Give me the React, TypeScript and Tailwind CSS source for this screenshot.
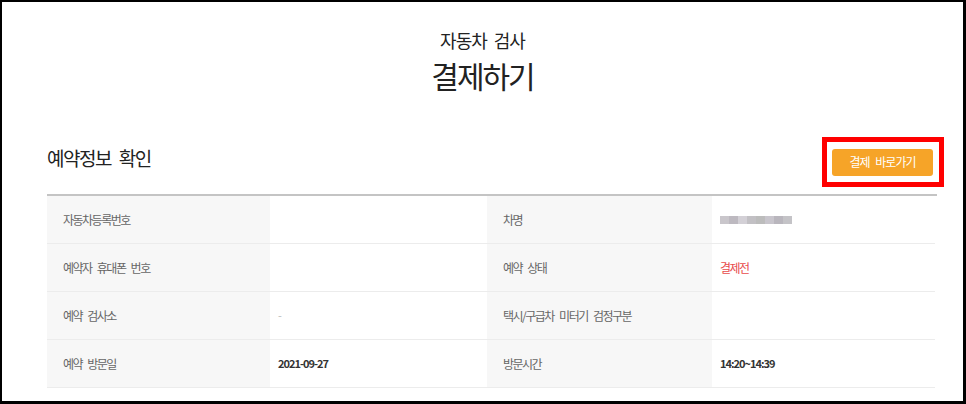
import React from "react";

interface Cell {
  label: string;
  value?: React.ReactNode;
}

const rows: [Cell, Cell][] = [
  [{ label: "자동차등록번호" }, { label: "차명", value: "blur" }],
  [{ label: "예약자 휴대폰 번호" }, { label: "예약 상태", value: "결제전" }],
  [{ label: "예약 검사소", value: "-" }, { label: "택시/구급차 미터기 검정구분" }],
  [
    { label: "예약 방문일", value: "2021-09-27" },
    { label: "방문시간", value: "14:20~14:39" },
  ],
];

function BlurredName() {
  // 모자이크 처리된 차명
  const tones = ["#c9c6cb", "#bdb9c0", "#d3d0d6", "#c2c0c4", "#bcbcbc", "#c8c5cc", "#b9b6bd", "#c4c3c7"];
  return (
    <div className="flex h-[8px] w-[72px] blur-[0.6px]">
      {tones.map((c, i) => (
        <span key={i} className="h-full flex-1" style={{ backgroundColor: c }} />
      ))}
    </div>
  );
}

function Value({ label, value }: Cell) {
  if (value === "blur") return <BlurredName />;
  if (label === "예약 상태")
    return <span className="text-[12px] tracking-[-1.5px] text-[#e84c4c]">{value}</span>;
  if (value === "-") return <span className="text-[11px] text-[#bbb]">-</span>;
  return <span className="text-[11px] font-semibold tracking-[-1px] text-[#333]">{value}</span>;
}

export default function App() {
  return (
    <div
      className="w-[966px] h-[404px] overflow-hidden bg-white border-t-2 border-l-2 border-r-[3px] border-b-[3px] border-black"
      style={{ fontFamily: '"Noto Sans CJK KR", "Noto Sans", sans-serif' }}
    >
      <div className="pt-[26px] text-center text-[#222]">
        <p className="text-[18px] leading-[24px] tracking-[-1px] [word-spacing:4px]">자동차 검사</p>
        <h1 className="mt-[3px] text-[30px] leading-[40px] tracking-[-2px]">결제하기</h1>
      </div>

      <div className="mt-[42px] flex items-start justify-between pl-[45px] pr-[19px]">
        <h2 className="pt-[8px] text-[19px] leading-[26px] tracking-[-1.5px] [word-spacing:5px] text-[#222]">
          예약정보 확인
        </h2>
        <div className="flex h-[50px] w-[122px] items-center justify-center border-[5px] border-[#ff0000]">
          <button className="ml-[-1px] h-[27px] w-[101px] rounded-[3px] bg-[#f6a428] text-[12px] tracking-[-1px] [word-spacing:4px] text-white">
            결제 바로가기
          </button>
        </div>
      </div>

      <div className="ml-[45px] mt-[7px] w-[890px] border-t-2 border-[#c4c4c4]">
        {rows.map((row, i) => (
          <div key={i} className="mr-[2px] grid h-[48px] grid-cols-[223px_217px_225px_1fr] border-b border-[#ececec]">
            {row.map((cell) => (
              <React.Fragment key={cell.label}>
                <div className="flex items-center bg-[#f7f7f7] pl-[16px] text-[12px] tracking-[-1.5px] [word-spacing:4px] text-[#666]">
                  {cell.label}
                </div>
                <div className="flex items-center pl-[8px]">
                  {cell.value !== undefined && <Value {...cell} />}
                </div>
              </React.Fragment>
            ))}
          </div>
        ))}
      </div>
    </div>
  );
}
